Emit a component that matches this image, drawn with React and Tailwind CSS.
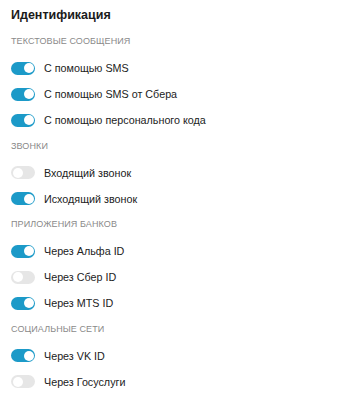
import React from "react";

const sections = [
  {
    title: "Текстовые сообщения",
    items: [
      { label: "С помощью SMS", on: true },
      { label: "С помощью SMS от Сбера", on: true },
      { label: "С помощью персонального кода", on: true },
    ],
  },
  {
    title: "Звонки",
    items: [
      { label: "Входящий звонок", on: false },
      { label: "Исходящий звонок", on: true },
    ],
  },
  {
    title: "Приложения банков",
    items: [
      { label: "Через Альфа ID", on: true },
      { label: "Через Сбер ID", on: false },
      { label: "Через MTS ID", on: true },
    ],
  },
  {
    title: "Социальные сети",
    items: [
      { label: "Через VK ID", on: true },
      { label: "Через Госуслуги", on: false },
    ],
  },
];

function Toggle({ on }) {
  return (
    <div
      className={
        on
          ? "w-[24px] h-[13px] rounded-full bg-[#1c9ac8] flex items-center justify-end px-[1.5px] shrink-0"
          : "w-[24px] h-[13px] rounded-full bg-[#e6e6e6] flex items-center justify-start px-[1.5px] shrink-0"
      }
    >
      <div className="w-[10px] h-[10px] rounded-full bg-white" />
    </div>
  );
}

export default function App() {
  return (
    <div
      className="w-[342px] h-[396px] bg-white px-[11px]"
      style={{ fontFamily: '"Liberation Sans", Arial, sans-serif' }}
    >
      <div className="h-[29px] flex items-center pt-[1px] text-[12.5px] font-bold text-[#1b1b1b]">
        Идентификация
      </div>
      {sections.map((s) => (
        <div key={s.title} className="flex flex-col">
          <div className="h-[26.15px] flex items-center text-[9px] tracking-[0.1px] uppercase text-[#8a8a8a]">
            {s.title}
          </div>
          {s.items.map((it) => (
            <div key={it.label} className="h-[26.15px] flex items-center gap-[9px]">
              <Toggle on={it.on} />
              <span className="text-[10.75px] text-[#222]">{it.label}</span>
            </div>
          ))}
        </div>
      ))}
    </div>
  );
}
